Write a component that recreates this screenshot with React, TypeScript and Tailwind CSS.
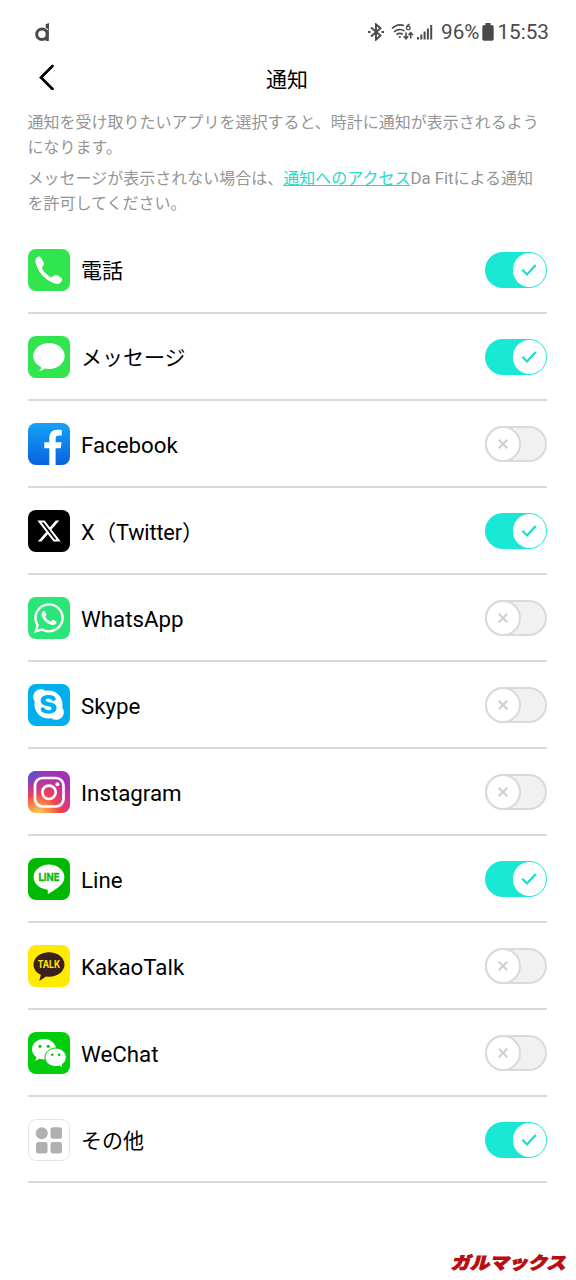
import React, { useState } from 'react';
import { FaWhatsapp, FaSkype, FaXTwitter } from 'react-icons/fa6';

const PhoneIcon = () => (
    <svg viewBox="0 0 42 42" className="w-full h-full">
        <rect width="42" height="42" rx="8" fill="#30e54d" />
        <path d="M7.300 11C7.500 9.500 9.500 7.500 11.300 7.500C13 7.600 15.800 13 16 15C16 16.800 13.900 17.300 14.100 19.200C14.600 22 20.500 27.600 23.200 28C25 28.200 25.800 25.800 27.600 25.700C29.400 25.700 34.200 28.600 34.200 30.300C34.200 32.200 32 34.700 30 34.900C26.500 35 20 31.600 15.500 27.400C11 23.200 7 15 7.300 11z" fill="#fff" />
    </svg>
);

const MessageIcon = () => (
    <svg viewBox="0 0 42 42" className="w-full h-full">
        <rect width="42" height="42" rx="8" fill="#30e54d" />
        <path d="M21 7C12.300 7 5.200 12.700 5.200 20c0 4.900 3.100 8.900 7.900 11 .1 1.600-.8 2.900-2.300 4.100 2.600 0 4.600-1 6-2.500 1.300.3 2.700.4 4.200.4 8.700 0 15.700-5.700 15.700-13S29.700 7 21 7z" fill="#fff" />
    </svg>
);

const FacebookIcon = () => (
    <svg viewBox="0 0 42 42" className="w-full h-full">
        <defs>
            <linearGradient id="fb" x1="0" y1="0" x2="0" y2="1">
                <stop offset="0" stopColor="#14a2f8" />
                <stop offset="1" stopColor="#0862df" />
            </linearGradient>
        </defs>
        <rect width="42" height="42" rx="8" fill="url(#fb)" />
        <path d="M21.300 42V25.300h-5v-6h5v-4.200c0-5.300 2.700-8.400 8.200-8.400 1.700 0 3.100.1 4.300.4v5.300h-2.900c-2.400 0-3.300 1-3.300 3.200v3.700h6l-.9 6h-5.100V42z" fill="#fff" />
    </svg>
);

const XIcon = () => (
    <div className="w-full h-full rounded-lg bg-black flex items-center justify-center">
        <FaXTwitter size={26} color="#fff" />
    </div>
);

const WhatsAppIcon = () => (
    <div className="w-full h-full rounded-lg bg-[#2ae577] flex items-center justify-center">
        <FaWhatsapp size={34} color="#fff" />
    </div>
);

const SkypeIcon = () => (
    <div className="w-full h-full rounded-lg bg-[#00aff0] flex items-center justify-center">
        <FaSkype size={35} color="#fff" />
    </div>
);

const InstagramIcon = () => (
    <svg viewBox="0 0 42 42" className="w-full h-full">
        <defs>
            <radialGradient id="igWarm" cx="0.25" cy="1.05" r="1">
                <stop offset="0" stopColor="#fed85f" />
                <stop offset="0.25" stopColor="#fc9245" />
                <stop offset="0.5" stopColor="#f4434f" />
                <stop offset="0.85" stopColor="#c52fa0" />
                <stop offset="1" stopColor="#a430b8" />
            </radialGradient>
            <radialGradient id="igCool" cx="0" cy="0" r="0.65">
                <stop offset="0" stopColor="#3b5fd4" />
                <stop offset="1" stopColor="#a436bd" stopOpacity="0" />
            </radialGradient>
        </defs>
        <rect width="42" height="42" rx="8" fill="url(#igWarm)" />
        <rect width="42" height="42" rx="8" fill="url(#igCool)" />
        <g fill="none" stroke="#fff" strokeWidth="2.700">
            <rect x="7" y="7" width="28.500" height="28.500" rx="7.500" />
            <circle cx="21" cy="21.300" r="6.700" />
        </g>
        <circle cx="29.400" cy="13.200" r="2" fill="#fff" />
    </svg>
);

const LineIcon = () => (
    <svg viewBox="0 0 42 42" className="w-full h-full">
        <rect width="42" height="42" rx="8" fill="#00b900" />
        <path d="M21 6.500c-8.500 0-15.400 5.600-15.400 12.500 0 6.200 5.500 11.400 12.900 12.400 1.800.3 1.500 1.500 1.200 4 0 .5.300.6.900.3 3-1.600 9.500-5.600 12.700-9.200 2-2.200 3.100-4.700 3.100-7.500C36.400 12.100 29.500 6.500 21 6.500z" fill="#fff" />
        <text x="10.500" y="22.800" textLength="21" lengthAdjust="spacingAndGlyphs" className="font-['Inter',sans-serif] font-bold" fontSize="10" fill="#00b900" stroke="#00b900" strokeWidth="0.300">LINE</text>
    </svg>
);

const KakaoIcon = () => (
    <svg viewBox="0 0 42 42" className="w-full h-full">
        <rect width="42" height="42" rx="8" fill="#ffeb00" />
        <path d="M21 7.200c-8.500 0-15.500 5.400-15.500 12.200 0 4.600 3 8.300 7.400 10.300-.4 1.800-1 3.700-1.500 5.300-.1.500.3.700.7.500 2-1.200 4.100-2.700 5.900-4 1 .1 2 .2 3 .2 8.500 0 15.500-5.500 15.500-12.300S29.500 7.200 21 7.200z" fill="#3b1e1e" />
        <text x="9.700" y="23.300" textLength="22.500" lengthAdjust="spacingAndGlyphs" className="font-['Inter',sans-serif] font-bold" fontSize="10" fill="#ffeb00">TALK</text>
    </svg>
);

const WeChatIcon = () => (
    <svg viewBox="0 0 42 42" className="w-full h-full">
        <rect width="42" height="42" rx="8" fill="#00cd0c" />
        <path d="M16 7C9.300 7 4 11.400 4 17.200c0 3.300 1.700 5.900 4.400 7.800l-1.100 3.900 4.200-2.200c1.400.4 2.900.7 4.500.7 6.700 0 12-4.400 12-10.200S22.700 7 16 7z" fill="#fff" />
        <path d="M27.700 16.100c-6 0-10.700 4-10.700 9.200s4.700 9.200 10.700 9.200c1.400 0 2.600-.2 3.700-.5l3.700 1.900-1-3.300c2.500-1.700 4.200-4.300 4.200-7.300 0-5.200-4.800-9.200-10.600-9.200z" fill="#fff" stroke="#00cd0c" strokeWidth="1" />
        <g fill="#00cd0c">
            <circle cx="12" cy="14.300" r="1.600" />
            <circle cx="20.200" cy="14.300" r="1.600" />
            <circle cx="24.300" cy="22.700" r="1.300" />
            <circle cx="31.100" cy="22.700" r="1.300" />
        </g>
    </svg>
);

const OtherIcon = () => (
    <svg viewBox="0 0 42 42" className="w-full h-full">
        <rect x="0.500" y="0.500" width="41" height="41" rx="8" fill="#fff" stroke="#e3e3e3" />
        <g fill="#b0b0b0">
            <circle cx="13.800" cy="14.200" r="6" />
            <rect x="22.500" y="8.300" width="11.500" height="11.500" rx="2.500" />
            <rect x="8" y="23" width="11.500" height="11.500" rx="2.500" />
            <rect x="22.500" y="23" width="11.500" height="11.500" rx="2.500" />
        </g>
    </svg>
);

const apps = [
    { name: '電話', Icon: PhoneIcon, enabled: true, text: 'text-[21px]' },
    { name: 'メッセージ', Icon: MessageIcon, enabled: true, text: 'text-[21px]' },
    { name: 'Facebook', Icon: FacebookIcon, enabled: false, text: 'text-[22.300px]' },
    { name: 'X（Twitter）', Icon: XIcon, enabled: true, text: 'inline-block pt-0.5 text-[21.700px] tracking-[-0.150px]' },
    { name: 'WhatsApp', Icon: WhatsAppIcon, enabled: false, text: 'text-[22.300px]' },
    { name: 'Skype', Icon: SkypeIcon, enabled: false, text: 'text-[22.300px]' },
    { name: 'Instagram', Icon: InstagramIcon, enabled: false, text: 'text-[22.300px]' },
    { name: 'Line', Icon: LineIcon, enabled: true, text: 'text-[22.300px]' },
    { name: 'KakaoTalk', Icon: KakaoIcon, enabled: false, text: 'text-[22.300px]' },
    { name: 'WeChat', Icon: WeChatIcon, enabled: false, text: 'text-[22.300px]' },
    { name: 'その他', Icon: OtherIcon, enabled: true, text: 'text-[21px]' },
];

function Toggle({ on, onClick }: { on: boolean; onClick: () => void }) {
    if (on) {
        return (
            <button onClick={onClick} className="w-[62px] h-9 rounded-full bg-[#19e8d5] flex items-center justify-end pr-px">
                <span className="w-[33.500px] h-[34px] rounded-full bg-white flex items-center justify-center">
                    <svg width="16" height="14" viewBox="0 0 16 14" fill="none" stroke="#19dccb" strokeWidth="2.200">
                        <path d="M1.300 6.800l4.700 4.700L14.700 2" />
                    </svg>
                </span>
            </button>
        );
    }
    return (
        <button onClick={onClick} className="w-[62px] h-9 rounded-full bg-[#f1f1f1] border-2 border-[#dadada] flex items-center">
            <span className="w-9 h-9 -ml-0.5 shrink-0 rounded-full bg-white border-2 border-[#dadada] flex items-center justify-center">
                <svg width="10" height="10" viewBox="0 0 10 10" stroke="#d0d0d0" strokeWidth="2.200">
                    <path d="M0.700 0.700l8.600 8.600M9.300 0.700L0.700 9.300" />
                </svg>
            </span>
        </button>
    );
}

function StatusBar() {
    return (
        <div className="h-14 pt-2 pl-[34px] pr-[27px] flex items-center justify-between text-[#4a4a4a]">
            <svg width="16" height="20" viewBox="0 0 16 20" fill="none" stroke="#4a4a4a">
                <circle cx="8" cy="12.300" r="5.300" strokeWidth="3" />
                <path d="M13.300 8v11" strokeWidth="3" />
                <path d="M11.700 2.200L15 1v7.300l-1.600-1.500-1.700-.7z" fill="#4a4a4a" stroke="none" />
            </svg>
            <div className="flex items-center">
                <svg width="16" height="18" viewBox="0 0 16 18" fill="none" stroke="#4a4a4a" strokeWidth="1.900">
                    <path d="M3 4.500l9.500 8L8 16.700V1.300l4.500 4L3 13.500" />
                    <path d="M0 9h2.500M13.500 9H16" strokeWidth="2.200" />
                </svg>
                <svg width="23" height="18" viewBox="0 0 23 18" fill="none" stroke="#4a4a4a" strokeWidth="1.600" className="ml-[7px]">
                    <path d="M1 5.500C4.500 2 9 1.200 13 2.500M3 8.800c3-2.600 7.500-3 10.500-.8M5.500 11.600c2-1.500 4.500-1.500 6.300-.2" />
                    <path d="M18.700 1.200c-2.300.8-3.200 2.200-3.200 3.800a1.800 1.800 0 1 0 .3-1" strokeWidth="1.300" />
                    <path d="M15 9.500v6M12.800 13.300l2.200 2.400 2.200-2.400M19.700 15.500v-6M17.500 12l2.200-2.400 2.200 2.400" />
                    <circle cx="8.800" cy="14" r="1.100" fill="#4a4a4a" stroke="none" />
                </svg>
                <svg width="16" height="18" viewBox="0 0 16 18" fill="#4a4a4a" className="ml-[3px]">
                    <path d="M0 14h2v2.500H0zM3.300 11.500h2v5h-2zM6.600 8.500h2v8h-2zM9.900 5.500h2v11h-2zM13.200 2h2v14.500h-2z" />
                </svg>
                <span className="ml-2 text-[20.700px] leading-6">96%</span>
                <svg width="12" height="18" viewBox="0 0 12 18" fill="#4a4a4a" className="ml-[3px]">
                    <path d="M3.500 0h5v2H10a2 2 0 0 1 1.700 2v12a1.700 1.700 0 0 1-1.700 1.700H2A1.700 1.700 0 0 1 .3 16V4A2 2 0 0 1 2 2h1.500z" />
                </svg>
                <span className="ml-[3px] text-[20.700px] leading-6">15:53</span>
            </div>
        </div>
    );
}

export default function App() {
    const [enabled, setEnabled] = useState(apps.map((app) => app.enabled));

    const toggle = (index: number) => {
        setEnabled(enabled.map((value, i) => (i === index ? !value : value)));
    };

    return (
        <div className="w-[576px] h-[1280px] bg-white flex flex-col overflow-hidden font-['Roboto','Noto_Sans_CJK_JP',sans-serif]">
            <StatusBar />

            {/* Header */}
            <header className="h-[55px] pl-[39px] pr-[41px] grid grid-cols-[16px_1fr_16px] items-start">
                <svg width="16" height="26" viewBox="0 0 16 26" fill="none" stroke="#000" strokeWidth="2.700" strokeLinecap="round" className="mt-2">
                    <path d="M13.500 2L2 13.500 13.500 25" />
                </svg>
                <h1 className="pt-2 text-center text-[21px] leading-8 text-black">通知</h1>
            </header>

            <section className="h-[116px] pl-[27.5px] pr-6 space-y-1.5 text-[16px] leading-[24.500px] text-[#959595]">
                <p>
                    通知を受け取りたいアプリを選択すると、時計に通知が表示されるよう
                    <br />
                    になります。
                </p>
                <p>
                    メッセージが表示されない場合は、
                    <a href="#" className="text-[#2ad9ca] underline">通知へのアクセス</a>
                    <span className="text-[16.800px]">Da Fit</span>による通知
                    <br />
                    を許可してください。
                </p>
            </section>

            {/* App list */}
            <ul className="pl-[27.5px] pr-[29px]">
                {apps.map(({ name, Icon, text }, index) => (
                    <li key={name} className="h-[86.960px] pt-px flex items-center border-b-2 border-[#dadada]">
                        <div className="w-[42px] h-[42px] shrink-0">
                            <Icon />
                        </div>
                        <span className="ml-[11.500px] pt-[5px] flex-1 leading-8 text-black">
                            <span className={text}>{name}</span>
                        </span>
                        <Toggle on={enabled[index]} onClick={() => toggle(index)} />
                    </li>
                ))}
            </ul>

            <footer className="mt-auto pr-1 flex justify-end">
                <svg width="128" height="36" viewBox="0 0 128 36">
                    <text x="13" y="25.500" textLength="115" lengthAdjust="spacingAndGlyphs" transform="skewX(-14)" className="font-['Noto_Sans_CJK_JP',sans-serif] font-black" fontSize="17" fill="#b80d12" stroke="#b80d12" strokeWidth="1">ガルマックス</text>
                </svg>
            </footer>
        </div>
    );
}
